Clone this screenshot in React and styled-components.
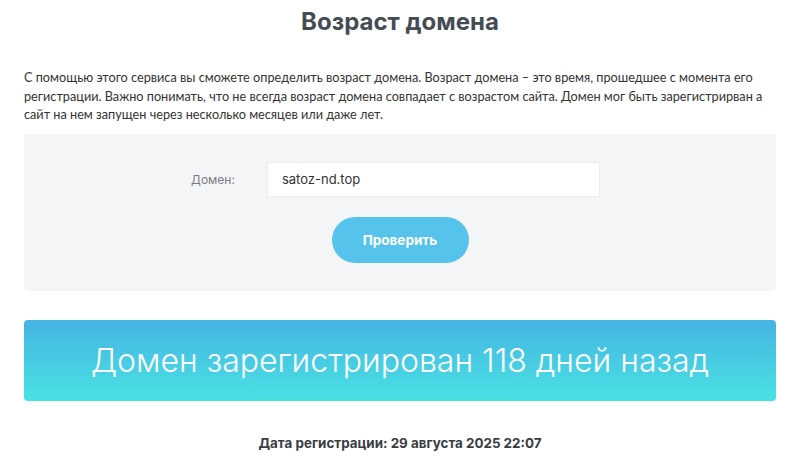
import styled, { createGlobalStyle } from 'styled-components'

const GlobalStyle = createGlobalStyle`
    body {
        margin: 0;
        background: #fff;
        font-family: 'Open Sans', 'Liberation Sans', sans-serif;
        color: #333;
    }
`

const Page = styled.main`
    padding: 0 24px;
`

const Title = styled.h1`
    margin: 6px 0 0;
    text-align: center;
    font-family: Inter, sans-serif;
    font-size: 24px;
    font-weight: 700;
    line-height: 32px;
    color: #454b53;
`

const Intro = styled.p`
    margin: 30px 0 0;
    font-family: Lato, sans-serif;
    font-size: 12.7px;
    line-height: 18.5px;
    color: #333;
`

const Panel = styled.form`
    margin-top: 10px;
    height: 157px;
    box-sizing: border-box;
    padding-top: 28px;
    background: #f4f5f7;
    border-radius: 4px;
    display: flex;
    flex-direction: column;
    align-items: center;
    gap: 20px;
`

const Field = styled.div`
    display: flex;
    align-items: center;
    gap: 32px;
    margin-left: -9px;
`

const Label = styled.label`
    font-family: Inter, sans-serif;
    font-size: 12px;
    color: #7a7d82;
`

const Input = styled.input`
    width: 333px;
    height: 35px;
    box-sizing: border-box;
    padding: 0 14px;
    border: 1px solid #ededed;
    background: #fff;
    font-family: Inter, sans-serif;
    font-size: 13px;
    color: #333;
    outline: none;
`

const Button = styled.button`
    width: 137px;
    height: 46px;
    border: 0;
    border-radius: 23px;
    background: #56c3ec;
    color: #fff;
    font-family: Inter, sans-serif;
    font-size: 13.5px;
    font-weight: 700;
`

const Result = styled.div`
    margin-top: 29px;
    height: 81px;
    border-radius: 4px;
    background: linear-gradient(to bottom, #46b4e4, #48e2e2);
    display: flex;
    align-items: center;
    justify-content: center;
    font-family: Inter, sans-serif;
    font-size: 32px;
    font-weight: 300;
    color: #fff;
`

const RegDate = styled.p`
    margin: 34px 0 0;
    text-align: center;
    font-family: Inter, sans-serif;
    font-size: 13.4px;
    font-weight: 700;
    color: #3a3d42;
`

export default function App() {
    return (
        <>
            <GlobalStyle />
            <Page>
                <Title>Возраст домена</Title>
                <Intro>
                    С помощью этого сервиса вы сможете определить возраст домена. Возраст домена – это
                    время, прошедшее с момента его регистрации. Важно понимать, что не всегда возраст
                    домена совпадает с возрастом сайта. Домен мог быть зарегистрирван а сайт на нем
                    запущен через несколько месяцев или даже лет.
                </Intro>
                <Panel onSubmit={(e) => e.preventDefault()}>
                    <Field>
                        <Label htmlFor="domain">Домен:</Label>
                        <Input id="domain" defaultValue="satoz-nd.top" />
                    </Field>
                    <Button type="submit">Проверить</Button>
                </Panel>
                <Result>Домен зарегистрирован 118 дней назад</Result>
                <RegDate>Дата регистрации: 29 августа 2025 22:07</RegDate>
            </Page>
        </>
    )
}
